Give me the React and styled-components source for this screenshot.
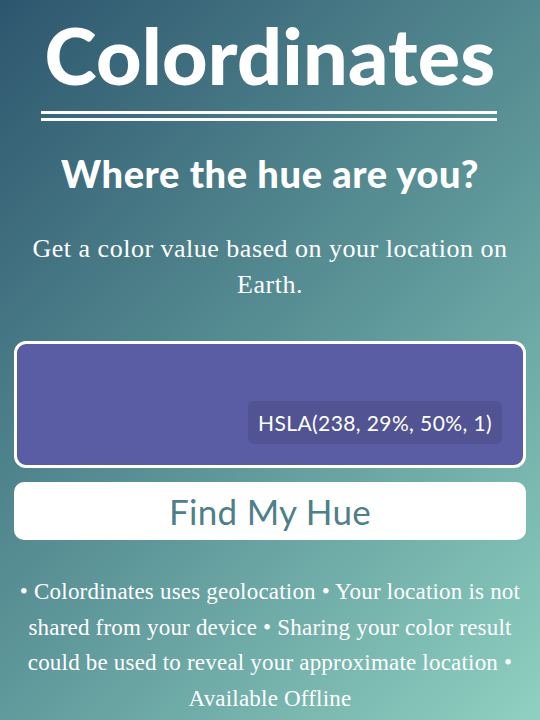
import React from "react"
import styled, { createGlobalStyle } from "styled-components"

const GlobalStyle = createGlobalStyle`
  html, body {
    margin: 0;
    padding: 0;
  }
  body {
    background: #4f8a8f;
  }
`

const Page = styled.main`
  box-sizing: border-box;
  min-height: 100vh;
  padding: 0 14px 20px;
  background: linear-gradient(135deg, #2d566e 0%, #5a9296 50%, #90d2c2 100%);
  color: #ffffff;
  text-align: center;
`

const Title = styled.h1`
  margin: 0;
  padding-top: 9px;
  font-family: Lato, "Noto Sans", sans-serif;
  font-weight: 900;
  font-size: 79px;
  line-height: 92px;
  letter-spacing: 0.2px;
`

const Rule = styled.div`
  margin: 10px 29px 0 27px;
  border-top: 10px double #ffffff;
`

const Subtitle = styled.h2`
  margin: 28px 0 0 0;
  font-family: Lato, "Noto Sans", sans-serif;
  font-weight: 900;
  font-size: 38px;
  line-height: 48px;
  letter-spacing: 0.6px;
`

const Intro = styled.p`
  margin: 34px 10px 0;
  font-family: "Liberation Serif", serif;
  font-size: 26px;
  line-height: 36px;
  letter-spacing: 0.5px;
`

const Swatch = styled.div`
  box-sizing: border-box;
  height: 127px;
  margin-top: 38px;
  display: flex;
  align-items: flex-end;
  justify-content: flex-end;
  padding: 0 21px 21px 0;
  border: 3px solid #ffffff;
  border-radius: 12px;
  background: ${(p) => p.color};
`

const ColorLabel = styled.div`
  padding: 0 10px;
  height: 43px;
  line-height: 43px;
  border-radius: 6px;
  background: rgba(0, 0, 0, 0.1);
  font-family: Lato, "Noto Sans", sans-serif;
  font-size: 21px;
  letter-spacing: 0.4px;
  color: #ffffff;
`

const HueButton = styled.button`
  display: block;
  width: 100%;
  height: 58px;
  margin-top: 14px;
  border: none;
  border-radius: 10px;
  background: #ffffff;
  color: #4e7f8a;
  font-family: Lato, "Noto Sans", sans-serif;
  font-weight: 400;
  font-size: 35px;
  letter-spacing: 0.3px;
  cursor: pointer;
`

const Notes = styled.p`
  margin: 34px -6px 0;
  font-family: "Liberation Serif", serif;
  font-size: 23px;
  line-height: 35.5px;
  letter-spacing: 0.2px;
`

const App = () => (
  <>
    <GlobalStyle />
    <Page>
      <Title>Colordinates</Title>
      <Rule />
      <Subtitle>Where the hue are you?</Subtitle>
      <Intro>Get a color value based on your location on Earth.</Intro>
      <Swatch color="hsla(238, 29%, 50%, 1)">
        <ColorLabel>HSLA(238, 29%, 50%, 1)</ColorLabel>
      </Swatch>
      <HueButton>Find My Hue</HueButton>
      <Notes>
        • Colordinates uses geolocation • Your location is not shared from your
        device • Sharing your color result could be used to reveal your
        approximate location • Available Offline
      </Notes>
    </Page>
  </>
)

export default App
